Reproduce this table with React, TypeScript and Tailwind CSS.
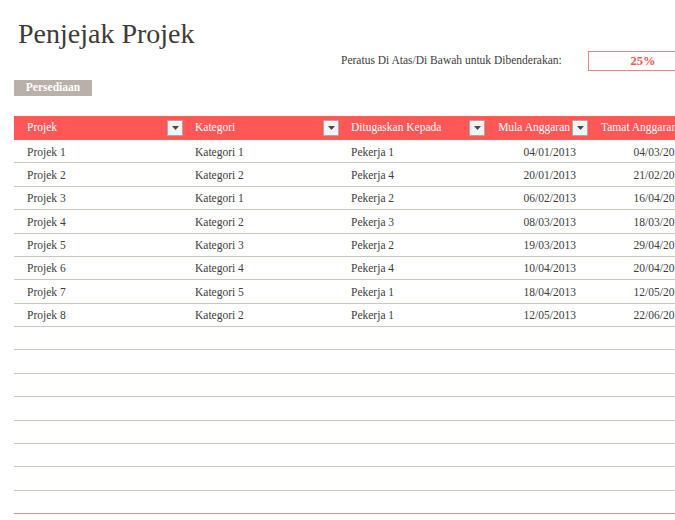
const rows = [
  ["Projek 1", "Kategori 1", "Pekerja 1", "04/01/2013", "04/03/2013"],
  ["Projek 2", "Kategori 2", "Pekerja 4", "20/01/2013", "21/02/2013"],
  ["Projek 3", "Kategori 1", "Pekerja 2", "06/02/2013", "16/04/2013"],
  ["Projek 4", "Kategori 2", "Pekerja 3", "08/03/2013", "18/03/2013"],
  ["Projek 5", "Kategori 3", "Pekerja 2", "19/03/2013", "29/04/2013"],
  ["Projek 6", "Kategori 4", "Pekerja 4", "10/04/2013", "20/04/2013"],
  ["Projek 7", "Kategori 5", "Pekerja 1", "18/04/2013", "12/05/2013"],
  ["Projek 8", "Kategori 2", "Pekerja 1", "12/05/2013", "22/06/2013"],
];

const cols = "grid grid-cols-[170px_156px_148px_102px_110px]";

function Drop() {
  return (
    <span className="flex h-[16px] w-[16px] shrink-0 items-center justify-center border border-[#a8a8a8] bg-[#f3f3f3]">
      <svg width="7" height="4" viewBox="0 0 7 4">
        <path d="M0 0h7L3.5 4z" fill="#4a4a4a" />
      </svg>
    </span>
  );
}

export default function App() {
  return (
    <div className="relative h-[520px] w-[675px] overflow-hidden bg-white font-['Liberation_Serif',serif] text-[#3c3c3c]">
      <h1 className="pl-[18px] pt-[18px] text-[28px] leading-[32px] text-[#3d3a37]">Penjejak Projek</h1>

      <div className="mt-[1px] flex h-[20px] items-center pl-[341px] text-[11.5px]">
        <span className="w-[247px] shrink-0 whitespace-nowrap">Peratus Di Atas/Di Bawah untuk Dibenderakan:</span>
        <div className="flex h-[20px] w-[100px] shrink-0 items-center justify-center border border-[#e98585] pl-[10px] text-[12.5px] font-bold text-[#ff5050]">
          25%
        </div>
      </div>

      <div className="ml-[14px] mt-[9px] flex h-[16px] w-[78px] items-center justify-center bg-[#b9b0a9] text-[11.5px] font-bold text-white">
        Persediaan
      </div>

      <div className="ml-[14px] mt-[20px] w-[686px]">
        <div className={`${cols} h-[24px] bg-[#ff5656] text-[11.5px] text-white`}>
          <div className="flex items-center justify-between pl-[13px] pr-[1px]">
            <span>Projek</span>
            <Drop />
          </div>
          <div className="flex items-center justify-between pl-[11px] pr-[1px]">
            <span>Kategori</span>
            <Drop />
          </div>
          <div className="flex items-center justify-between pl-[11px] pr-[3px]">
            <span>Ditugaskan Kepada</span>
            <Drop />
          </div>
          <div className="flex items-center justify-end gap-[2px] pr-[2px]">
            <span className="whitespace-nowrap">Mula Anggaran</span>
            <Drop />
          </div>
          <div className="flex items-center pl-[11px]">
            <span className="whitespace-nowrap">Tamat Anggaran</span>
          </div>
        </div>

        {rows.map((r) => (
          <div key={r[0]} className={`${cols} h-[23.375px] border-b border-[#c9c6c0] pt-[2px] text-[11.5px]`}>
            <div className="flex items-center pl-[13px]">{r[0]}</div>
            <div className="flex items-center pl-[11px]">{r[1]}</div>
            <div className="flex items-center pl-[11px]">{r[2]}</div>
            <div className="flex items-center justify-end pr-[14px]">{r[3]}</div>
            <div className="flex items-center justify-end pr-[14px]">{r[4]}</div>
          </div>
        ))}

        {Array.from({ length: 7 }).map((_, i) => (
          <div key={i} className="h-[23.375px] border-b border-[#c9c6c0]" />
        ))}
        <div className="h-[23.375px] border-b border-[#e88a8a]" />
      </div>
    </div>
  );
}
